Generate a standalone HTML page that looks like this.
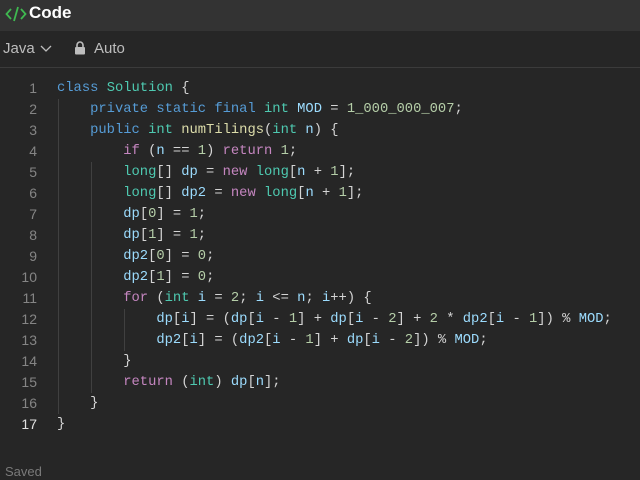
<!DOCTYPE html>
<html><head><meta charset="utf-8"><style>
*{margin:0;padding:0;box-sizing:border-box}
body{width:640px;height:480px;background:#262626;overflow:hidden;font-family:"Liberation Sans",sans-serif;position:relative}
.hdr{position:absolute;left:0;top:0;width:640px;height:31px;background:#333333}
.hdr .t{position:absolute;left:29px;top:2px;color:#fff;font-size:17px;font-weight:bold;line-height:22px}
.tb{position:absolute;left:0;top:31px;width:640px;height:37px;background:#262626;border-bottom:1px solid #3b3b3b}
.tb span{position:absolute;top:9px;color:#bdbdbd;font-size:15px}
.code{position:absolute;left:0;top:78px;font-family:"Liberation Mono",monospace;font-size:13.8px;line-height:21px;color:#d4d4d4;white-space:pre}
.ln{position:absolute;left:0;width:37px;text-align:right;color:#858585;font-family:"Liberation Sans",sans-serif;font-size:14px}
.l{position:absolute;left:57px}
.k{color:#569cd6}.ty{color:#4ec9b0}.c{color:#c586c0}.f{color:#dcdcaa}.v{color:#9cdcfe}.n{color:#b5cea8}
.g{position:absolute;width:1px;background:#404040}
.saved{position:absolute;left:5px;top:464px;color:#7a7a7a;font-size:13px}
</style></head><body>
<div class="hdr">
<svg style="position:absolute;left:5px;top:5px" width="22" height="18" viewBox="0 0 22 18"><path d="M6 4 L1.5 9 L6 14" stroke="#3fb950" stroke-width="1.8" fill="none"/><path d="M13 2 L9 16" stroke="#3fb950" stroke-width="1.8"/><path d="M16 4 L20.5 9 L16 14" stroke="#3fb950" stroke-width="1.8" fill="none"/></svg>
<div class="t">Code</div></div>
<div class="tb">
<span style="left:3px">Java</span>
<svg style="position:absolute;left:40px;top:14px" width="12" height="8" viewBox="0 0 12 8"><path d="M1 1 L6 6 L11 1" stroke="#bdbdbd" stroke-width="1.3" fill="none"/></svg>
<svg style="position:absolute;left:74px;top:10px" width="12" height="14" viewBox="0 0 12 14"><path d="M3 6 V4 A3 3 0 0 1 9 4 V6" stroke="#bdbdbd" stroke-width="1.6" fill="none"/><rect x="1" y="6" width="10" height="7.5" rx="1" fill="#bdbdbd"/></svg>
<span style="left:94px">Auto</span>
</div>
<div class="g" style="left:58px;top:99px;height:315px"></div>
<div class="g" style="left:91px;top:162px;height:231px"></div>
<div class="g" style="left:124px;top:309px;height:42px"></div>
<div class="code">
<div class="ln" style="top:0">1</div><div class="l" style="top:0"><span class="k">class</span> <span class="ty">Solution</span> {</div>
<div class="ln" style="top:21px">2</div><div class="l" style="top:21px">    <span class="k">private</span> <span class="k">static</span> <span class="k">final</span> <span class="ty">int</span> <span class="v">MOD</span> = <span class="n">1_000_000_007</span>;</div>
<div class="ln" style="top:42px">3</div><div class="l" style="top:42px">    <span class="k">public</span> <span class="ty">int</span> <span class="f">numTilings</span>(<span class="ty">int</span> <span class="v">n</span>) {</div>
<div class="ln" style="top:63px">4</div><div class="l" style="top:63px">        <span class="c">if</span> (<span class="v">n</span> == <span class="n">1</span>) <span class="c">return</span> <span class="n">1</span>;</div>
<div class="ln" style="top:84px">5</div><div class="l" style="top:84px">        <span class="ty">long</span>[] <span class="v">dp</span> = <span class="c">new</span> <span class="ty">long</span>[<span class="v">n</span> + <span class="n">1</span>];</div>
<div class="ln" style="top:105px">6</div><div class="l" style="top:105px">        <span class="ty">long</span>[] <span class="v">dp2</span> = <span class="c">new</span> <span class="ty">long</span>[<span class="v">n</span> + <span class="n">1</span>];</div>
<div class="ln" style="top:126px">7</div><div class="l" style="top:126px">        <span class="v">dp</span>[<span class="n">0</span>] = <span class="n">1</span>;</div>
<div class="ln" style="top:147px">8</div><div class="l" style="top:147px">        <span class="v">dp</span>[<span class="n">1</span>] = <span class="n">1</span>;</div>
<div class="ln" style="top:168px">9</div><div class="l" style="top:168px">        <span class="v">dp2</span>[<span class="n">0</span>] = <span class="n">0</span>;</div>
<div class="ln" style="top:189px">10</div><div class="l" style="top:189px">        <span class="v">dp2</span>[<span class="n">1</span>] = <span class="n">0</span>;</div>
<div class="ln" style="top:210px">11</div><div class="l" style="top:210px">        <span class="c">for</span> (<span class="ty">int</span> <span class="v">i</span> = <span class="n">2</span>; <span class="v">i</span> &lt;= <span class="v">n</span>; <span class="v">i</span>++) {</div>
<div class="ln" style="top:231px">12</div><div class="l" style="top:231px">            <span class="v">dp</span>[<span class="v">i</span>] = (<span class="v">dp</span>[<span class="v">i</span> - <span class="n">1</span>] + <span class="v">dp</span>[<span class="v">i</span> - <span class="n">2</span>] + <span class="n">2</span> * <span class="v">dp2</span>[<span class="v">i</span> - <span class="n">1</span>]) % <span class="v">MOD</span>;</div>
<div class="ln" style="top:252px">13</div><div class="l" style="top:252px">            <span class="v">dp2</span>[<span class="v">i</span>] = (<span class="v">dp2</span>[<span class="v">i</span> - <span class="n">1</span>] + <span class="v">dp</span>[<span class="v">i</span> - <span class="n">2</span>]) % <span class="v">MOD</span>;</div>
<div class="ln" style="top:273px">14</div><div class="l" style="top:273px">        }</div>
<div class="ln" style="top:294px">15</div><div class="l" style="top:294px">        <span class="c">return</span> (<span class="ty">int</span>) <span class="v">dp</span>[<span class="v">n</span>];</div>
<div class="ln" style="top:315px">16</div><div class="l" style="top:315px">    }</div>
<div class="ln" style="top:336px;color:#e0e0e0">17</div><div class="l" style="top:336px">}</div>
</div>
<div class="saved">Saved</div>
</body></html>
